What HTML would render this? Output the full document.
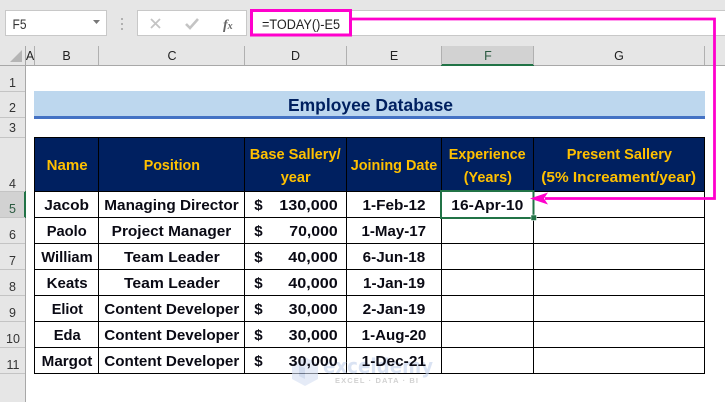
<!DOCTYPE html>
<html><head><meta charset="utf-8"><style>
html,body{margin:0;padding:0;background:#e6e6e6;width:725px;height:402px;overflow:hidden}
svg{display:block}
text{font-family:"Liberation Sans",sans-serif}
.b{font-weight:bold;font-size:15px;fill:#0a0a14}
.h{font-weight:bold;font-size:15px;fill:#ffc000}
.l{font-size:13px;fill:#222}
</style></head><body>
<svg width="725" height="402" viewBox="0 0 725 402" xmlns="http://www.w3.org/2000/svg">
<rect width="725" height="402" fill="#e6e6e6"/>
<!-- name box -->
<rect x="5.500" y="10.500" width="101" height="25" fill="#fff" stroke="#c8c8c8"/>
<text x="12.500" y="29" font-size="13.500" fill="#333" textLength="14" lengthAdjust="spacingAndGlyphs">F5</text>
<path d="M93 20h7l-3.500 4z" fill="#777"/>
<g fill="#b0b0b0"><rect x="121" y="18" width="2" height="2"/><rect x="121" y="23" width="2" height="2"/><rect x="121" y="28" width="2" height="2"/></g>
<!-- buttons -->
<rect x="137.500" y="10.500" width="109" height="25" fill="#fff" stroke="#c8c8c8"/>
<path d="M151 19l9 9M160 19l-9 9" stroke="#c4c4c4" stroke-width="1.800" fill="none"/>
<path d="M186 24l4 4 8-9" stroke="#c4c4c4" stroke-width="2.600" fill="none"/>
<text x="223" y="29" font-size="14" font-style="italic" font-weight="bold" fill="#666" style="font-family:'Liberation Serif',serif">f<tspan font-size="10">x</tspan></text>
<!-- formula bar -->
<rect x="250" y="10" width="475" height="25.500" fill="#fff"/>
<rect x="250" y="10" width="475" height="1" fill="#c8c8c8"/>
<rect x="250" y="35" width="475" height="1" fill="#c8c8c8"/>
<text x="262" y="29" font-size="13.500" fill="#222" textLength="78" lengthAdjust="spacingAndGlyphs">=TODAY()-E5</text>
<!-- sheet -->
<rect x="26" y="66" width="699" height="336" fill="#fff"/>
<rect x="0" y="65" width="725" height="1" fill="#a8a8a8"/>
<rect x="25" y="46" width="1" height="356" fill="#a8a8a8"/>
<path d="M10 62L22 50V62z" fill="#b5b5b5"/>
<!-- col headers -->
<rect x="441" y="46" width="92.500" height="19" fill="#d2d2d2"/>
<rect x="441" y="64" width="93" height="2" fill="#217346"/>
<g fill="#b0b0b0">
<rect x="34" y="46" width="1" height="19"/><rect x="98" y="46" width="1" height="19"/><rect x="244" y="46" width="1" height="19"/><rect x="346" y="46" width="1" height="19"/><rect x="441" y="46" width="1" height="19"/><rect x="533" y="46" width="1" height="19"/><rect x="704" y="46" width="1" height="19"/>
</g>
<g font-size="12.500" fill="#222" text-anchor="middle">
<text x="30" y="60">A</text><text x="66.500" y="60">B</text><text x="172" y="60">C</text><text x="295.500" y="60">D</text><text x="394" y="60">E</text><text x="488" y="60" fill="#2a5a40">F</text><text x="619" y="60">G</text>
</g>
<!-- row headers -->
<rect x="0" y="192" width="25" height="25" fill="#d2d2d2"/>
<rect x="24" y="191" width="2" height="27" fill="#217346"/>
<g fill="#c4c4c4">
<rect x="0" y="91" width="25" height="1"/><rect x="0" y="117" width="25" height="1"/><rect x="0" y="137" width="25" height="1"/><rect x="0" y="191" width="25" height="1"/><rect x="0" y="217" width="25" height="1"/><rect x="0" y="243" width="25" height="1"/><rect x="0" y="269" width="25" height="1"/><rect x="0" y="295" width="25" height="1"/><rect x="0" y="321" width="25" height="1"/><rect x="0" y="347" width="25" height="1"/><rect x="0" y="373" width="25" height="1"/>
</g>
<g font-size="12.500" fill="#333" text-anchor="middle">
<text x="12.500" y="87">1</text><text x="12.500" y="112">2</text><text x="12.500" y="132">3</text><text x="12.500" y="188">4</text><text x="12.500" y="213" fill="#2a5a40">5</text><text x="12.500" y="239">6</text><text x="12.500" y="265">7</text><text x="12.500" y="291">8</text><text x="12.500" y="317">9</text><text x="13" y="343">10</text><text x="13" y="369">11</text>
</g>
<!-- title -->
<rect x="34" y="91" width="671" height="25" fill="#bdd7ee"/>
<rect x="34" y="116" width="671" height="3" fill="#4472c4"/>
<text x="288" y="111" font-size="17.500" font-weight="bold" fill="#002060" textLength="165" lengthAdjust="spacingAndGlyphs">Employee Database</text>
<!-- table -->
<rect x="34" y="137" width="671" height="54" fill="#002060"/>
<g stroke="#000" stroke-width="1" fill="none">
<path d="M34.500 137.500H704.500V373.500H34.500z"/>
<path d="M34 191.500H705M34 217.500H705M34 243.500H705M34 269.500H705M34 295.500H705M34 321.500H705M34 347.500H705"/>
<path d="M98.500 137V374M244.500 137V374M346.500 137V374M441.500 137V374M533.500 137V374"/>
</g>
<!-- watermark -->
<g opacity="0.6">
<path d="M292 364l13-7 13 7v15l-13 7-13-7z" fill="#d5dff2"/>
<path d="M299 365l6 3v11l-6-3z" fill="#b5c5e4"/>
<text x="323" y="373" font-size="20" font-weight="bold" fill="#c3d1ec" textLength="110" lengthAdjust="spacingAndGlyphs" style="font-family:'DejaVu Sans',sans-serif">exceldemy</text>
<text x="335" y="383" font-size="7.500" fill="#b4b4b4" textLength="83" font-weight="bold">EXCEL · DATA · BI</text>
</g>
<!-- header text -->
<text class="h" x="46.700" y="170" textLength="41" lengthAdjust="spacingAndGlyphs">Name</text>
<text class="h" x="143.700" y="170" textLength="56.300" lengthAdjust="spacingAndGlyphs">Position</text>
<text class="h" x="249.700" y="159" textLength="91" lengthAdjust="spacingAndGlyphs">Base Sallery/</text>
<text class="h" x="280.700" y="182" textLength="30" lengthAdjust="spacingAndGlyphs">year</text>
<text class="h" x="350.700" y="170" textLength="86.600" lengthAdjust="spacingAndGlyphs">Joining Date</text>
<text class="h" x="448.700" y="159" textLength="77" lengthAdjust="spacingAndGlyphs">Experience</text>
<text class="h" x="463.700" y="182" textLength="48.300" lengthAdjust="spacingAndGlyphs">(Years)</text>
<text class="h" x="566.700" y="159" textLength="105.300" lengthAdjust="spacingAndGlyphs">Present Sallery</text>
<text class="h" x="541.300" y="182" textLength="154.700" lengthAdjust="spacingAndGlyphs">(5% Increament/year)</text>
<!-- rows -->
<text class="b" x="44.300" y="210" textLength="44.700" lengthAdjust="spacingAndGlyphs">Jacob</text>
<text class="b" x="104.300" y="210" textLength="134.400" lengthAdjust="spacingAndGlyphs">Managing Director</text>
<text class="b" x="254.300" y="210" textLength="8.400" lengthAdjust="spacingAndGlyphs">$</text>
<text class="b" x="279.300" y="210" textLength="58.400" lengthAdjust="spacingAndGlyphs">130,000</text>
<text class="b" x="362.500" y="210" textLength="63" lengthAdjust="spacingAndGlyphs">1-Feb-12</text>
<text class="b" x="451.300" y="210" textLength="72" lengthAdjust="spacingAndGlyphs">16-Apr-10</text>

<text class="b" x="46.700" y="236" textLength="40" lengthAdjust="spacingAndGlyphs">Paolo</text>
<text class="b" x="111.700" y="236" textLength="119.600" lengthAdjust="spacingAndGlyphs">Project Manager</text>
<text class="b" x="254.300" y="236" textLength="8.400" lengthAdjust="spacingAndGlyphs">$</text>
<text class="b" x="289.300" y="236" textLength="48.400" lengthAdjust="spacingAndGlyphs">70,000</text>
<text class="b" x="361.500" y="236" textLength="64.500" lengthAdjust="spacingAndGlyphs">1-May-17</text>

<text class="b" x="41.300" y="262" textLength="51.400" lengthAdjust="spacingAndGlyphs">William</text>
<text class="b" x="124" y="262" textLength="95.700" lengthAdjust="spacingAndGlyphs">Team Leader</text>
<text class="b" x="254.300" y="262" textLength="8.400" lengthAdjust="spacingAndGlyphs">$</text>
<text class="b" x="288.300" y="262" textLength="49.400" lengthAdjust="spacingAndGlyphs">40,000</text>
<text class="b" x="362.700" y="262" textLength="62.500" lengthAdjust="spacingAndGlyphs">6-Jun-18</text>

<text class="b" x="46.700" y="288" textLength="41" lengthAdjust="spacingAndGlyphs">Keats</text>
<text class="b" x="124" y="288" textLength="95.700" lengthAdjust="spacingAndGlyphs">Team Leader</text>
<text class="b" x="254.300" y="288" textLength="8.400" lengthAdjust="spacingAndGlyphs">$</text>
<text class="b" x="288.300" y="288" textLength="49.400" lengthAdjust="spacingAndGlyphs">40,000</text>
<text class="b" x="363" y="288" textLength="62" lengthAdjust="spacingAndGlyphs">1-Jan-19</text>

<text class="b" x="51.700" y="314" textLength="31.300" lengthAdjust="spacingAndGlyphs">Eliot</text>
<text class="b" x="104.300" y="314" textLength="135" lengthAdjust="spacingAndGlyphs">Content Developer</text>
<text class="b" x="254.300" y="314" textLength="8.400" lengthAdjust="spacingAndGlyphs">$</text>
<text class="b" x="288.700" y="314" textLength="49" lengthAdjust="spacingAndGlyphs">30,000</text>
<text class="b" x="362.700" y="314" textLength="62.600" lengthAdjust="spacingAndGlyphs">2-Jan-19</text>

<text class="b" x="53.700" y="340" textLength="27" lengthAdjust="spacingAndGlyphs">Eda</text>
<text class="b" x="104.300" y="340" textLength="135" lengthAdjust="spacingAndGlyphs">Content Developer</text>
<text class="b" x="254.300" y="340" textLength="8.400" lengthAdjust="spacingAndGlyphs">$</text>
<text class="b" x="288.700" y="340" textLength="49" lengthAdjust="spacingAndGlyphs">30,000</text>
<text class="b" x="361.700" y="340" textLength="64.600" lengthAdjust="spacingAndGlyphs">1-Aug-20</text>

<text class="b" x="41.700" y="366" textLength="50.600" lengthAdjust="spacingAndGlyphs">Margot</text>
<text class="b" x="104.300" y="366" textLength="135" lengthAdjust="spacingAndGlyphs">Content Developer</text>
<text class="b" x="254.300" y="366" textLength="8.400" lengthAdjust="spacingAndGlyphs">$</text>
<text class="b" x="288.700" y="366" textLength="49" lengthAdjust="spacingAndGlyphs">30,000</text>
<text class="b" x="361.700" y="366" textLength="64.300" lengthAdjust="spacingAndGlyphs">1-Dec-21</text>
<!-- selection -->
<rect x="441" y="191" width="92.500" height="27" fill="none" stroke="#217346" stroke-width="2"/>
<rect x="531" y="215" width="5.500" height="5.500" fill="#217346" stroke="#fff" stroke-width="0.500"/>
<!-- pink annotations -->
<rect x="251.500" y="10.500" width="99" height="24.500" fill="none" stroke="#ff00cc" stroke-width="3"/>
<path d="M352 19H714.500V198.500H545" fill="none" stroke="#ff00cc" stroke-width="2.800"/>
<path d="M530 198.500L548 192.500L544 198.500L548 204.500z" fill="#ff00cc"/>
</svg>
</body></html>
